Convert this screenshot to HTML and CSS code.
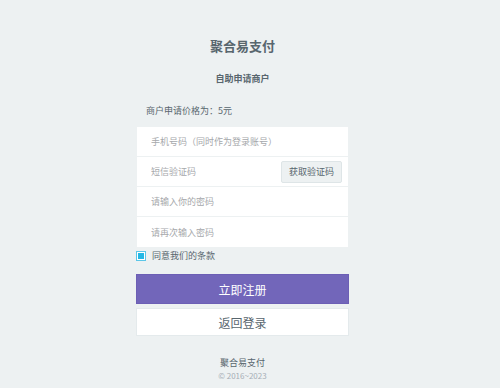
FILE: index.html
```html
<!DOCTYPE html>
<html lang="zh-CN">
<head>
    <meta charset="UTF-8">
    <meta name="viewport" content="width=device-width, initial-scale=1.0">
    <title>自助申请商户 - 聚合易支付</title>
    <link rel="stylesheet" href="styles.css">
</head>
<body>
    <div class="page">
        <div class="reg-box">
            <h1 class="site-name">聚合易支付</h1>
            <h2 class="reg-title">自助申请商户</h2>
            <p class="price-tip">商户申请价格为：5元</p>

            <!-- 注册表单 -->
            <form class="reg-form" onsubmit="return false">
                <div class="form-row">
                    <input type="text" class="form-input" placeholder="手机号码（同时作为登录账号）">
                </div>
                <div class="form-row">
                    <input type="text" class="form-input" placeholder="短信验证码">
                    <button type="button" class="code-btn">获取验证码</button>
                </div>
                <div class="form-row">
                    <input type="password" class="form-input" placeholder="请输入你的密码">
                </div>
                <div class="form-row">
                    <input type="password" class="form-input" placeholder="请再次输入密码">
                </div>
            </form>

            <label class="agree">
                <span class="agree-box"><span class="agree-dot"></span></span>
                <span class="agree-text">同意我们的条款</span>
            </label>

            <button type="button" class="btn btn-primary">立即注册</button>
            <button type="button" class="btn btn-default">返回登录</button>

            <div class="footer">
                <p class="footer-name">聚合易支付</p>
                <p class="footer-copy">© 2016~2023</p>
            </div>
        </div>
    </div>
</body>
</html>
```

FILE: styles.css
```css
/* General */
body {
    margin: 0;
    background: #edf1f2;
    font-family: "Noto Sans CJK SC", "Noto Sans", sans-serif;
    color: #58666e;
}

.page {
    display: flex;
    justify-content: center;
    padding-right: 15px;
}

.reg-box {
    width: 213px;
    padding-top: 37px;
}

/* Titles */
.site-name {
    margin: 0;
    text-align: center;
    font-size: 13px;
    line-height: 18px;
    font-weight: bold;
    color: #58666e;
}

.reg-title {
    margin: 17px 0 0;
    text-align: center;
    font-size: 9px;
    line-height: 13px;
    font-weight: bold;
    color: #58666e;
}

.price-tip {
    margin: 19px 0 0;
    padding-left: 10px;
    font-size: 9px;
    line-height: 13px;
    color: #58666e;
}

/* Form */
.reg-form {
    margin: 10px 1px 0;
    background: #fff;
}

.form-row {
    box-sizing: border-box;
    display: flex;
    align-items: center;
    height: 30px;
    border-bottom: 1px solid #edf1f2;
    padding-right: 6px;
}

.form-row:last-child {
    border-bottom: none;
}

.form-input {
    flex: 1;
    min-width: 0;
    border: none;
    outline: none;
    background: transparent;
    padding: 0 0 0 14px;
    font-family: inherit;
    font-size: 9px;
    color: #555;
}

.form-input::placeholder {
    color: #a6a8ab;
}

.code-btn {
    height: 22px;
    width: 61px;
    padding: 0;
    border: 1px solid #dee5e7;
    border-radius: 2px;
    background: #edf1f2;
    font-family: inherit;
    font-size: 9px;
    color: #58666e;
}

/* Checkbox */
.agree {
    display: flex;
    align-items: center;
    gap: 6px;
    height: 13px;
    margin-top: 2px;
}

.agree-box {
    display: flex;
    align-items: center;
    justify-content: center;
    width: 8px;
    height: 8px;
    border: 1px solid #5bc6e8;
    background: #fff;
}

.agree-dot {
    width: 6px;
    height: 6px;
    background: #23b7e5;
}

.agree-text {
    font-size: 9px;
    color: #58666e;
}

/* Buttons */
.btn {
    display: block;
    width: 100%;
    font-family: inherit;
    font-size: 12px;
    cursor: pointer;
}

.btn-primary {
    margin-top: 12px;
    height: 30px;
    border: 1px solid #6c5fb5;
    background: #7266ba;
    color: #fff;
}

.btn-default {
    margin-top: 4px;
    height: 28px;
    border: 1px solid #e4eaec;
    background: #fff;
    color: #58666e;
}

/* Footer */
.footer {
    margin-top: 20px;
    text-align: center;
}

.footer-name {
    margin: 0;
    font-size: 9px;
    line-height: 13px;
    color: #58666e;
}

.footer-copy {
    margin: 1px 0 0;
    font-size: 8px;
    line-height: 12px;
    color: #a6aeb6;
}
```
